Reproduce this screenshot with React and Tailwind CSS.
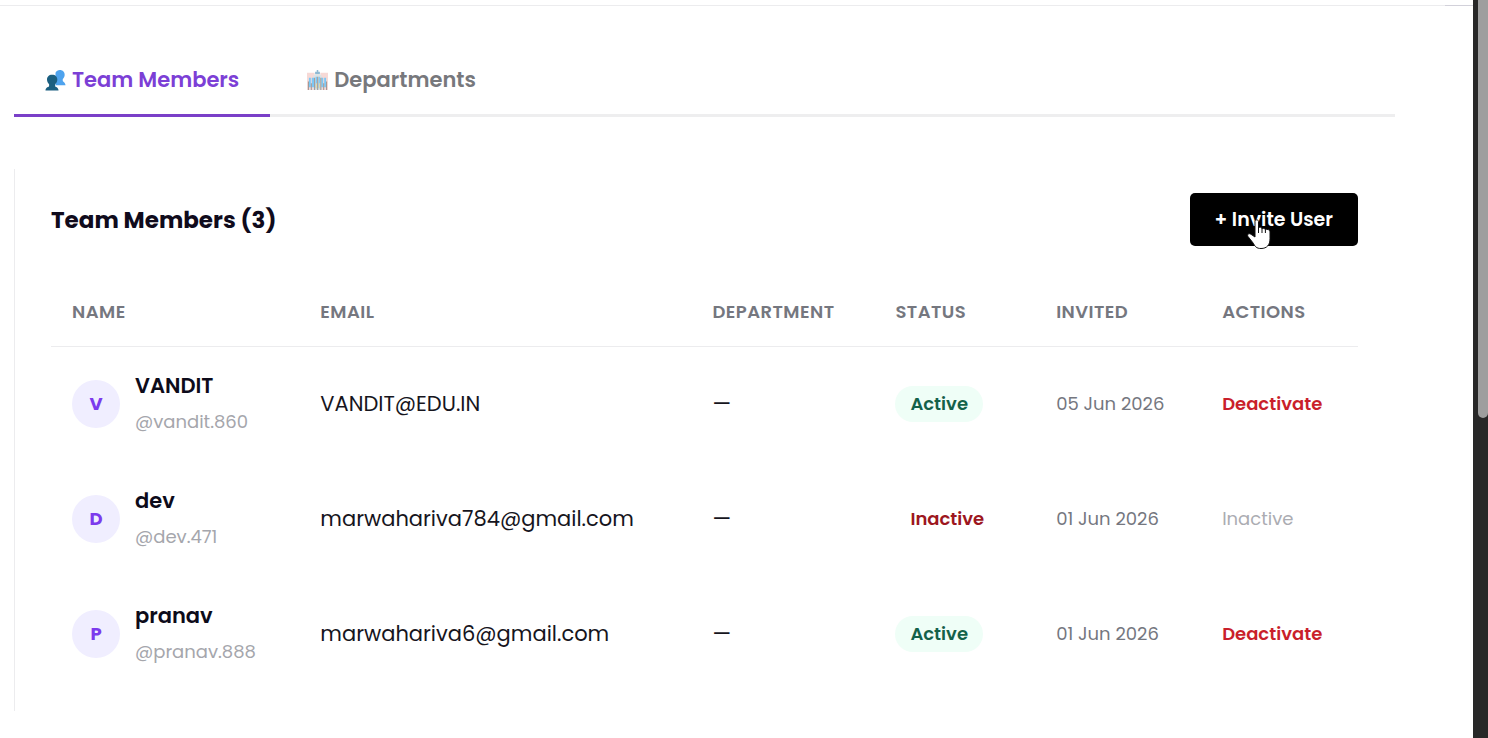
import React from 'react';

const members = [
  { name: 'VANDIT', handle: '@vandit.860', email: 'VANDIT@EDU.IN', active: true, invited: '05 Jun 2026' },
  { name: 'dev', handle: '@dev.471', email: 'marwahariva784@gmail.com', active: false, invited: '01 Jun 2026' },
  { name: 'pranav', handle: '@pranav.888', email: 'marwahariva6@gmail.com', active: true, invited: '01 Jun 2026' },
];

const PeopleIcon = () => (
  <svg viewBox="0 0 22 22" className="w-[21px] h-[21px] shrink-0" aria-hidden="true">
    <path fill="#4ea3ee" d="M15.500 0c3.300 0 5.300 2.300 5.100 5.200-.1 1.900-.9 3.300-2 4.200v1.800c0 1.200 2.700 1.400 2.900 4.800H11V3C12 1 13.500 0 15.500 0z" />
    <path fill="#1b5f80" d="M7.500 5c3.500 0 5.500 2.200 5.400 5.200-.1 1.900-.9 3.600-2.300 4.600v2c0 1.200 3.400 1 3.600 4.700H.5c.2-3.700 3.800-3.500 3.800-4.700v-2C3 13.800 2.200 12.100 2.100 10.200 2 7.200 4 5 7.500 5z" />
  </svg>
);

const BuildingIcon = () => (
  <svg viewBox="0 0 22 22" className="w-[21px] h-[21px] shrink-0" aria-hidden="true">
    <path fill="#f6d9d6" d="M0 3h8v18H0zM14 3h8v18h-8z" />
    <path fill="#dbe3e6" d="M6.500 6L11 2.500 15.500 6v15h-9z" />
    <path fill="#8fb9d3" d="M10.200 0h1.600v1.800h1.700v2.400h-5V1.800h1.700z" />
    <path fill="#7cc8f5" d="M2 8h2v10H2zM5 8h2.500v10H5zM9 7h1.500v12H9zM12 7h1.500v12H12zM15 8h2v10h-2zM18 8h2v10h-2z" />
    <path fill="#9b9491" d="M1 12h1v9H1zM4 14h1v7H4zM7.500 8h1v13h-1zM10.700 7h1v14h-1zM14 8h1v13h-1zM17 14h1v7h-1zM20 12h1v9h-1z" />
    <path fill="#e9d9a4" d="M9.500 14h1v5h-1zM12.500 14h1v5h-1z" />
  </svg>
);

const HandCursor = () => (
  <svg viewBox="0 0 24 32" className="absolute left-[57px] top-[25px] w-6 h-8 pointer-events-none" aria-hidden="true">
    <path
      fill="#fff"
      stroke="#111"
      strokeWidth="1"
      strokeLinejoin="round"
      d="M8 3.500C8 1.300 11.500 1.300 11.500 3.500V10c.8-1.300 3.300-1 3.500.8.900-1 3.200-.6 3.400 1 1.200-1 4.600-.4 4.600 2v7c0 6-3 9.700-9 9.700-4.500 0-6-2-7.500-5L1 18.500c-1.200-2 .8-3.700 3-2.200L8 19z"
    />
    <path stroke="#111" strokeWidth="1" d="M11.500 9v6M15 10.500V15M18.400 11.500V15" />
  </svg>
);

const MemberRow = ({ member }) => (
  <tr className="h-[115px]">
    <td className="px-[21px]">
      <div className="flex items-center gap-[15px]">
        <div className="flex items-center justify-center w-12 h-12 shrink-0 rounded-full bg-[#f0eeff] text-lg font-bold text-[#7c3aed]">
          {member.name[0].toUpperCase()}
        </div>
        <div>
          <p className="text-[21px] leading-9 font-semibold text-[#0d0b1a]">{member.name}</p>
          <p className="text-lg leading-9 text-[#a5a6ac]">{member.handle}</p>
        </div>
      </div>
    </td>
    <td className="px-[21px] text-[21px] text-[#16151d]">{member.email}</td>
    <td className="px-[21px] text-[21px] text-[#16151d]">—</td>
    <td className="px-[21px]">
      {member.active ? (
        <span className="inline-block rounded-full bg-[#effef7] px-[15px] py-1 text-lg font-semibold text-[#14614a]">Active</span>
      ) : (
        <span className="inline-block rounded-full px-[15px] py-1 text-lg font-semibold text-[#9d1620]">Inactive</span>
      )}
    </td>
    <td className="px-[21px] text-lg text-[#75777f]">{member.invited}</td>
    <td className="px-[21px] text-lg">
      {member.active ? (
        <button type="button" className="font-semibold text-[#c91f2b]">Deactivate</button>
      ) : (
        <span className="text-[#abacb2]">Inactive</span>
      )}
    </td>
  </tr>
);

const App = () => {
  return (
    <div className="flex min-h-screen bg-white font-['Poppins','Inter',sans-serif]">
      <main className="flex-1 min-w-0">
        <div className="flex h-1.5 items-end">
          <div className="flex-1 border-b border-[#ececee]" />
          <div className="w-7 border-b border-[#d2d1da]" />
        </div>

        <div className="pl-3.5 pr-[78px]">
          <nav className="flex gap-1.5 mt-10 border-b-3 border-[#eeeeef] text-[21px] leading-8 font-semibold">
            <button type="button" className="flex items-center gap-1.5 h-[71px] px-[31px] -mb-[3px] border-b-3 border-[#7a3fc8] text-[#7c3fd6]">
              <PeopleIcon />
              Team Members
            </button>
            <button type="button" className="flex items-center gap-1.5 h-[71px] px-[31px] -mb-[3px] border-b-3 border-transparent text-[#77787c]">
              <BuildingIcon />
              Departments
            </button>
          </nav>

          <section className="mt-[52px] border-l border-[#ececee] pl-9 pr-[37px] pt-6 pb-5">
            <div className="flex items-center justify-between">
              <h2 className="text-[23px] leading-8 font-bold text-[#100b1c]">Team Members (3)</h2>
              <button type="button" className="relative h-[53px] px-[25px] rounded-[5px] bg-black text-[19px] leading-7 font-semibold text-white">
                + Invite User
                <HandCursor />
              </button>
            </div>

            <table className="w-full table-fixed mt-8 text-left">
              <thead>
                <tr className="h-[68px] border-b border-[#ececee] text-lg tracking-wide text-[#75777f]">
                  <th className="w-[19%] px-[21px] font-semibold">NAME</th>
                  <th className="w-[30%] px-[21px] font-semibold">EMAIL</th>
                  <th className="w-[14%] px-[21px] font-semibold">DEPARTMENT</th>
                  <th className="w-[12.3%] px-[21px] font-semibold">STATUS</th>
                  <th className="w-[12.7%] px-[21px] font-semibold">INVITED</th>
                  <th className="px-[21px] font-semibold">ACTIONS</th>
                </tr>
              </thead>
              <tbody>
                {members.map((member) => (
                  <MemberRow key={member.handle} member={member} />
                ))}
              </tbody>
            </table>
          </section>
        </div>
      </main>

      {/* Scrollbar */}
      <aside className="flex w-[15px] justify-end bg-[#282828]">
        <div className="h-[418px] w-2.5 rounded-b-md bg-[#9e9e9e]" />
      </aside>
    </div>
  );
};

export default App;
